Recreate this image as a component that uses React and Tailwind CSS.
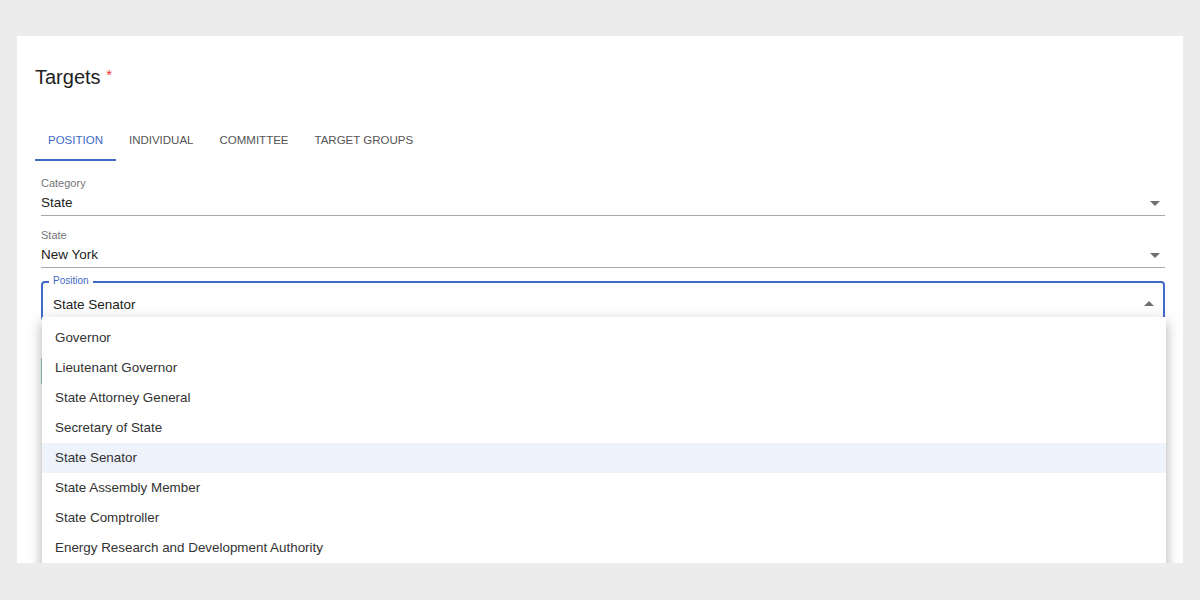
import React from 'react'

const font = { fontFamily: '"Liberation Sans", Arial, sans-serif' }

const tabs = ['Position', 'Individual', 'Committee', 'Target Groups']

const options = [
  'Governor',
  'Lieutenant Governor',
  'State Attorney General',
  'Secretary of State',
  'State Senator',
  'State Assembly Member',
  'State Comptroller',
  'Energy Research and Development Authority',
]

function Caret({ up = false, className = '' }) {
  return (
    <svg viewBox="0 0 24 24" className={`h-6 w-6 fill-[#707070] ${className}`}>
      <path d={up ? 'M7 14l5-5 5 5z' : 'M7 10l5 5 5-5z'} />
    </svg>
  )
}

function UnderlinedSelect({ label, value }) {
  return (
    <div className="ml-[6px] border-b border-[#a8a8a8]">
      <div className="text-[11px] leading-[14px] text-[#757575]">{label}</div>
      <div className="mt-[3px] flex h-[20px] items-center justify-between">
        <span className="text-[13.5px] text-[#222]">{value}</span>
        <Caret className="mr-[-2px]" />
      </div>
      <div className="h-[2px]" />
    </div>
  )
}

export default function App() {
  return (
    <div className="min-h-[600px] bg-[#ececec] px-[17px] pt-[36px]" style={font}>
      <div className="relative h-[527px] overflow-hidden bg-white px-[18px]">
        {/* Title */}
        <div className="pt-[27px] text-[20px] leading-[28px] text-[#222]">
          Targets <span className="relative top-[-4px] text-[15px] text-[#e53935]">*</span>
        </div>

        {/* Tabs */}
        <div className="mt-[30px] flex">
          {tabs.map((t, i) => (
            <div
              key={t}
              className={`flex h-[38px] items-center px-[13px] text-[11.5px] font-medium uppercase ${
                i === 0 ? 'border-b-2 border-[#4169c6] text-[#4169c6]' : 'pb-[2px] text-[#555]'
              }`}
            >
              {t}
            </div>
          ))}
        </div>

        {/* Fields */}
        <div className="mt-[15px] flex flex-col gap-[12px]">
          <UnderlinedSelect label="Category" value="State" />
          <UnderlinedSelect label="State" value="New York" />
        </div>

        <div className="relative ml-[6px] mt-[13px] h-[40px] rounded-[4px] border-2 border-[#4169c6]">
          <span className="absolute left-[6px] top-[-9px] bg-white px-[4px] text-[10px] leading-[14px] text-[#4169c6]">
            Position
          </span>
          <div className="flex h-full items-start justify-between pl-[10px] pr-[2px] pt-[13px]">
            <span className="text-[13.5px] leading-[18px] text-[#222]">State Senator</span>
            <Caret up className="mt-[-4px]" />
          </div>
        </div>

        {/* content hidden behind the open menu */}
        <div className="ml-[6px] mt-[37px] h-[26px] w-[120px] border-l border-[#9ad2b2]" />

        {/* Open menu */}
        <div className="absolute left-[25px] right-[17px] top-[281px] bg-white pt-[6px] shadow-[0_5px_5px_-3px_rgba(0,0,0,0.2),0_8px_10px_1px_rgba(0,0,0,0.14),0_3px_14px_2px_rgba(0,0,0,0.12)]">
          {options.map((o) => (
            <div
              key={o}
              className={`flex h-[30px] items-center px-[13px] pt-[1px] text-[13.4px] text-[#333] ${
                o === 'State Senator' ? 'bg-[#eef2fa]' : ''
              }`}
            >
              {o}
            </div>
          ))}
          <div className="h-[30px]" />
        </div>
      </div>
    </div>
  )
}
